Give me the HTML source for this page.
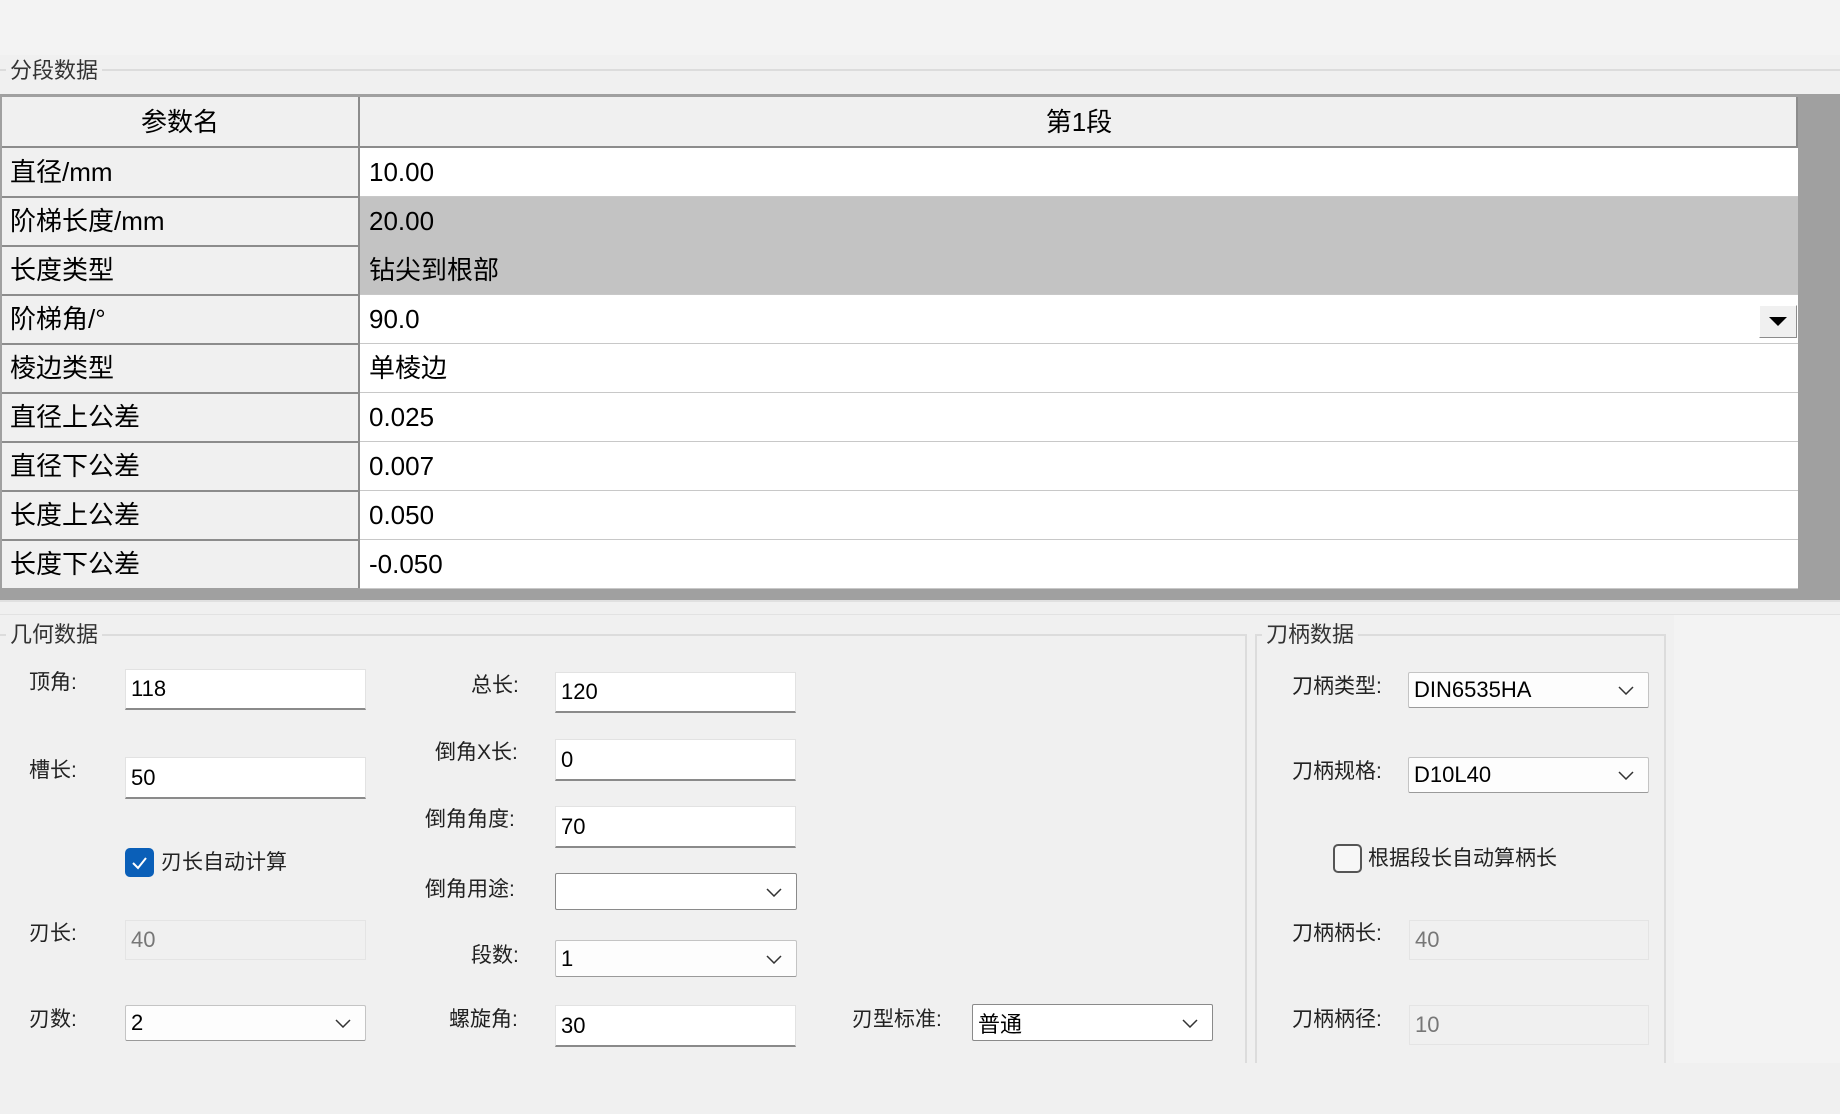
<!DOCTYPE html>
<html><head><meta charset="utf-8">
<style>
*{margin:0;padding:0;box-sizing:border-box}
body{width:1840px;height:1114px;background:#f0f0f0;position:relative;overflow:hidden;font-family:"Liberation Sans","Noto Sans CJK SC",sans-serif;color:#000}
.a{position:absolute}
.lbl{position:absolute;font-size:21px;color:#222;line-height:24px;white-space:nowrap}
.inp{position:absolute;background:#fff;border:1px solid #e2e2e2;border-bottom:2px solid #8a8a8a;font-size:22px;padding-left:5px;display:flex;align-items:center}
.dis{position:absolute;background:#f0f0f0;border:1px solid #e4e4e4;font-size:22px;color:#777;padding-left:5px;display:flex;align-items:center}
.dd{position:absolute;background:#fdfdfd;border:1px solid #c4c4c4;border-bottom:1px solid #9a9a9a;border-radius:2px;font-size:22px;padding-left:5px;display:flex;align-items:center}
.dd svg{position:absolute;right:14px;top:50%;margin-top:-4px}
.cell{position:absolute;font-size:26px;line-height:49px;padding-left:10px;white-space:nowrap}
</style></head><body>
<div class="a" style="left:0;top:0;width:1840px;height:55px;background:#f3f3f3"></div>
<div class="a" style="left:0;top:69px;width:1840px;height:2px;background:#dcdcdc"></div>
<div class="a" style="left:6px;top:58px;padding:0 4px;background:#f0f0f0;font-size:22px;color:#333;line-height:26px">分段数据</div>

<!-- table -->
<div class="a" style="left:0;top:94px;width:1840px;height:506px;background:#a0a0a0"></div>
<div class="a" style="left:2px;top:97px;width:1796px;height:491px;background:#fff"></div>
<div class="a" style="left:2px;top:97px;width:1796px;height:51px;background:#f0f0f0;border-bottom:2px solid #8c8c8c"></div>
<div class="a" style="left:2px;top:148px;width:357px;height:440px;background:#f0f0f0"></div>
<div class="a" style="left:359px;top:197px;width:1439px;height:98px;background:#c3c3c3"></div>
<div class="a" style="left:358px;top:97px;width:2px;height:491px;background:#8c8c8c"></div>
<div class="a" style="left:1796px;top:97px;width:2px;height:51px;background:#8c8c8c"></div>
<!-- row lines -->
<div class="a" style="left:2px;top:196px;width:356px;height:2px;background:#8c8c8c"></div>
<div class="a" style="left:2px;top:245px;width:356px;height:2px;background:#8c8c8c"></div>
<div class="a" style="left:2px;top:294px;width:356px;height:2px;background:#8c8c8c"></div>
<div class="a" style="left:2px;top:343px;width:356px;height:2px;background:#8c8c8c"></div>
<div class="a" style="left:2px;top:392px;width:356px;height:2px;background:#8c8c8c"></div>
<div class="a" style="left:2px;top:441px;width:356px;height:2px;background:#8c8c8c"></div>
<div class="a" style="left:2px;top:490px;width:356px;height:2px;background:#8c8c8c"></div>
<div class="a" style="left:2px;top:539px;width:356px;height:2px;background:#8c8c8c"></div>
<div class="a" style="left:360px;top:196px;width:1438px;height:1px;background:#c8c8c8"></div>
<div class="a" style="left:360px;top:294px;width:1438px;height:1px;background:#c8c8c8"></div>
<div class="a" style="left:360px;top:343px;width:1438px;height:1px;background:#c8c8c8"></div>
<div class="a" style="left:360px;top:392px;width:1438px;height:1px;background:#c8c8c8"></div>
<div class="a" style="left:360px;top:441px;width:1438px;height:1px;background:#c8c8c8"></div>
<div class="a" style="left:360px;top:490px;width:1438px;height:1px;background:#c8c8c8"></div>
<div class="a" style="left:360px;top:539px;width:1438px;height:1px;background:#c8c8c8"></div>
<div class="a" style="left:360px;top:588px;width:1438px;height:1px;background:#c8c8c8"></div>

<div class="cell" style="left:2px;top:98px;width:356px;text-align:center;padding:0">参数名</div>
<div class="cell" style="left:360px;top:98px;width:1438px;text-align:center;padding:0">第1段</div>
<div class="cell" style="left:0;top:148px">直径/mm</div><div class="cell" style="left:359px;top:148px">10.00</div>
<div class="cell" style="left:0;top:197px">阶梯长度/mm</div><div class="cell" style="left:359px;top:197px">20.00</div>
<div class="cell" style="left:0;top:246px">长度类型</div><div class="cell" style="left:359px;top:246px">钻尖到根部</div>
<div class="cell" style="left:0;top:295px">阶梯角/°</div><div class="cell" style="left:359px;top:295px">90.0</div>
<div class="cell" style="left:0;top:344px">棱边类型</div><div class="cell" style="left:359px;top:344px">单棱边</div>
<div class="cell" style="left:0;top:393px">直径上公差</div><div class="cell" style="left:359px;top:393px">0.025</div>
<div class="cell" style="left:0;top:442px">直径下公差</div><div class="cell" style="left:359px;top:442px">0.007</div>
<div class="cell" style="left:0;top:491px">长度上公差</div><div class="cell" style="left:359px;top:491px">0.050</div>
<div class="cell" style="left:0;top:540px">长度下公差</div><div class="cell" style="left:359px;top:540px">-0.050</div>
<div class="a" style="left:1759px;top:305px;width:38px;height:33px;background:#f0f0f0;border:1px solid #8c8c8c;border-top-color:#fff;border-left-color:#fff"></div>
<svg class="a" style="left:1768px;top:316px" width="20" height="12"><path d="M1 1 L19 1 L10 10 Z" fill="#000"/></svg>

<div class="a" style="left:0;top:600px;width:1840px;height:2px;background:#e0e0e0"></div>
<div class="a" style="left:0;top:614px;width:1840px;height:1px;background:#e2e2e2"></div>
<div class="a" style="left:1674px;top:615px;width:166px;height:448px;background:#f3f3f3"></div>

<!-- group 1 -->
<div class="a" style="left:0;top:634px;width:1247px;height:429px;border-top:2px solid #dcdcdc;border-right:2px solid #dcdcdc"></div>
<div class="a" style="left:6px;top:622px;padding:0 4px;background:#f0f0f0;font-size:22px;color:#333;line-height:26px">几何数据</div>
<!-- group 2 -->
<div class="a" style="left:1255px;top:634px;width:411px;height:429px;border:2px solid #dcdcdc;border-bottom:none"></div>
<div class="a" style="left:1262px;top:622px;padding:0 4px;background:#f0f0f0;font-size:22px;color:#333;line-height:26px">刀柄数据</div>

<div class="lbl" style="left:29px;top:671px">顶角:</div>
<div class="inp" style="left:125px;top:669px;width:241px;height:41px">118</div>
<div class="lbl" style="left:29px;top:759px">槽长:</div>
<div class="inp" style="left:125px;top:757px;width:241px;height:42px">50</div>
<div class="a" style="left:125px;top:848px;width:29px;height:29px;background:#0a5fb8;border-radius:5px"></div>
<svg class="a" style="left:125px;top:848px" width="29" height="29"><path d="M8 15 L13 20 L21 10" stroke="#fff" stroke-width="2" fill="none"/></svg>
<div class="lbl" style="left:161px;top:851px">刃长自动计算</div>
<div class="lbl" style="left:29px;top:922px">刃长:</div>
<div class="dis" style="left:125px;top:920px;width:241px;height:40px">40</div>
<div class="lbl" style="left:29px;top:1008px">刃数:</div>
<div class="dd" style="left:125px;top:1005px;width:241px;height:36px">2<svg width="16" height="9"><path d="M1 1 L8 8 L15 1" stroke="#333" stroke-width="1.5" fill="none"/></svg></div>

<div class="lbl" style="left:471px;top:674px">总长:</div>
<div class="inp" style="left:555px;top:672px;width:241px;height:41px">120</div>
<div class="lbl" style="left:435px;top:741px">倒角X长:</div>
<div class="inp" style="left:555px;top:739px;width:241px;height:42px">0</div>
<div class="lbl" style="left:425px;top:808px">倒角角度:</div>
<div class="inp" style="left:555px;top:806px;width:241px;height:42px">70</div>
<div class="lbl" style="left:425px;top:878px">倒角用途:</div>
<div class="dd" style="left:555px;top:873px;width:242px;height:37px;background:#fff;border-color:#8a8a8a"><svg width="16" height="9"><path d="M1 1 L8 8 L15 1" stroke="#333" stroke-width="1.5" fill="none"/></svg></div>
<div class="lbl" style="left:471px;top:944px">段数:</div>
<div class="dd" style="left:555px;top:940px;width:242px;height:37px">1<svg width="16" height="9"><path d="M1 1 L8 8 L15 1" stroke="#333" stroke-width="1.5" fill="none"/></svg></div>
<div class="lbl" style="left:449px;top:1008px">螺旋角:</div>
<div class="inp" style="left:555px;top:1005px;width:241px;height:42px">30</div>

<div class="lbl" style="left:852px;top:1008px">刃型标准:</div>
<div class="dd" style="left:972px;top:1004px;width:241px;height:37px;background:#fff;border-color:#8a8a8a">普通<svg width="16" height="9"><path d="M1 1 L8 8 L15 1" stroke="#333" stroke-width="1.5" fill="none"/></svg></div>

<div class="lbl" style="left:1292px;top:675px">刀柄类型:</div>
<div class="dd" style="left:1408px;top:672px;width:241px;height:36px">DIN6535HA<svg width="16" height="9"><path d="M1 1 L8 8 L15 1" stroke="#333" stroke-width="1.5" fill="none"/></svg></div>
<div class="lbl" style="left:1292px;top:760px">刀柄规格:</div>
<div class="dd" style="left:1408px;top:757px;width:241px;height:36px">D10L40<svg width="16" height="9"><path d="M1 1 L8 8 L15 1" stroke="#333" stroke-width="1.5" fill="none"/></svg></div>
<div class="a" style="left:1333px;top:844px;width:29px;height:29px;border:2px solid #555;border-radius:5px;background:#f7f7f7"></div>
<div class="lbl" style="left:1368px;top:847px">根据段长自动算柄长</div>
<div class="lbl" style="left:1292px;top:922px">刀柄柄长:</div>
<div class="dis" style="left:1409px;top:920px;width:240px;height:40px">40</div>
<div class="lbl" style="left:1292px;top:1008px">刀柄柄径:</div>
<div class="dis" style="left:1409px;top:1005px;width:240px;height:40px">10</div>
</body></html>
